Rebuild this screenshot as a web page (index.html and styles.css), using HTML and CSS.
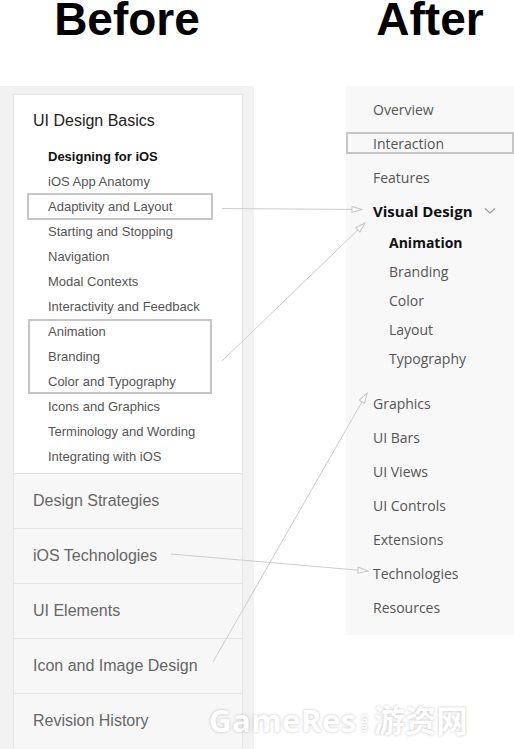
FILE: index.html
```html
<!DOCTYPE html>
<html lang="en">

<head>
    <meta charset="UTF-8">
    <meta name="viewport" content="width=device-width, initial-scale=1.0">
    <title>Before / After</title>
    <link rel="stylesheet" href="styles.css">
</head>

<body>
    <div class="page">
        <!-- Titulos -->
        <div class="header">
            <h1 class="title title-before">Before</h1>
            <h1 class="title title-after">After</h1>
        </div>

        <div class="columns">
            <!-- Navegacao antiga -->
            <div class="old-panel">
                <div class="old-card">
                    <div class="old-top">
                        <div class="old-heading">UI Design Basics</div>
                        <ul class="old-list">
                            <li class="old-item current">Designing for iOS</li>
                            <li class="old-item">iOS App Anatomy</li>
                            <li class="old-item boxed">Adaptivity and Layout</li>
                            <li class="old-item">Starting and Stopping</li>
                            <li class="old-item">Navigation</li>
                            <li class="old-item">Modal Contexts</li>
                            <li class="old-item">Interactivity and Feedback</li>
                            <li class="old-group">
                                <div class="old-item">Animation</div>
                                <div class="old-item">Branding</div>
                                <div class="old-item">Color and Typography</div>
                            </li>
                            <li class="old-item">Icons and Graphics</li>
                            <li class="old-item">Terminology and Wording</li>
                            <li class="old-item">Integrating with iOS</li>
                        </ul>
                    </div>
                    <div class="old-section">Design Strategies</div>
                    <div class="old-section">iOS Technologies</div>
                    <div class="old-section">UI Elements</div>
                    <div class="old-section">Icon and Image Design</div>
                    <div class="old-section">Revision History</div>
                </div>
            </div>

            <!-- Navegacao nova -->
            <div class="new-panel">
                <div class="new-item">Overview</div>
                <div class="new-item boxed">Interaction</div>
                <div class="new-item">Features</div>
                <div class="new-item active">
                    Visual Design
                    <svg class="chevron" width="12" height="8" viewBox="0 0 12 8">
                        <path d="M1 1.5 L6 6 L11 1.5" fill="none" stroke="#9a9a9a" stroke-width="1.2"/>
                    </svg>
                </div>
                <div class="new-sub">
                    <div class="new-subitem current">Animation</div>
                    <div class="new-subitem">Branding</div>
                    <div class="new-subitem">Color</div>
                    <div class="new-subitem">Layout</div>
                    <div class="new-subitem">Typography</div>
                </div>
                <div class="new-item">Graphics</div>
                <div class="new-item">UI Bars</div>
                <div class="new-item">UI Views</div>
                <div class="new-item">UI Controls</div>
                <div class="new-item">Extensions</div>
                <div class="new-item">Technologies</div>
                <div class="new-item">Resources</div>
            </div>
        </div>

        <!-- Setas por cima -->
        <svg class="arrows" width="514" height="749" viewBox="0 0 514 749">
            <defs>
                <marker id="head" markerWidth="12" markerHeight="10" refX="11" refY="4" orient="auto" markerUnits="userSpaceOnUse">
                    <path d="M1 1 L11 4 L1 7 Z" fill="#fff" stroke="#c4c4c4" stroke-width="1"/>
                </marker>
            </defs>
            <line x1="222" y1="208.5" x2="362" y2="209.5" marker-end="url(#head)"/>
            <line x1="222" y1="361" x2="365" y2="223" marker-end="url(#head)"/>
            <line x1="171" y1="554" x2="368" y2="571" marker-end="url(#head)"/>
            <line x1="213" y1="662" x2="367" y2="393" marker-end="url(#head)"/>
        </svg>

        <div class="watermark">GameRes<span class="wm-com">com</span>游资网</div>
    </div>
</body>

</html>
```

FILE: styles.css
```css
body {
    margin: 0;
    font-family: "Liberation Sans", Arial, sans-serif;
    background-color: #fff;
}

.page {
    position: relative;
    width: 514px;
    height: 749px;
    overflow: hidden;
}

.header {
    display: flex;
    height: 86px;
}

.title {
    margin: 0;
    font-size: 46px;
    line-height: 38px;
    font-weight: bold;
    color: #000;
    text-align: center;
}

.title-before {
    width: 254px;
}

.title-after {
    width: 168px;
    margin-left: 92px;
}

.columns {
    display: flex;
    align-items: flex-start;
}

/* ---- before ---- */

.old-panel {
    width: 254px;
    height: 663px;
    box-sizing: border-box;
    padding: 8px 11px 0 13px;
    background-color: #f2f2f2;
}

.old-card {
    background-color: #fff;
    border: 1px solid #e6e6e6;
    border-bottom: none;
}

.old-top {
    padding: 15px 0 4px 0;
}

.old-heading {
    padding-left: 19px;
    font-size: 16px;
    line-height: 22px;
    color: #222;
}

.old-list {
    list-style: none;
    margin: 12px 0 0 0;
    padding: 0;
}

.old-item {
    height: 25px;
    line-height: 25px;
    padding-left: 34px;
    font-size: 13px;
    color: #555;
}

.old-item.current {
    font-weight: bold;
    color: #111;
}

.old-item.boxed {
    margin-left: 14px;
    width: 184px;
    padding-left: 20px;
    box-sizing: border-box;
    outline: 2px solid #c6c6c6;
    outline-offset: -1px;
}

.old-group {
    margin-left: 14px;
    width: 184px;
    outline: 2px solid #c6c6c6;
    outline-offset: -2px;
}

.old-group .old-item {
    padding-left: 20px;
}

.old-section {
    height: 54px;
    line-height: 54px;
    padding-left: 19px;
    border-top: 1px solid #e4e4e4;
    background-color: #f7f7f7;
    font-size: 16px;
    color: #666;
}

/* ---- after ---- */

.new-panel {
    display: flex;
    flex-direction: column;
    gap: 12px;
    width: 168px;
    margin-left: 92px;
    padding: 12px 0 17px 0;
    background-color: #f8f8f8;
    font-family: "Open Sans", sans-serif;
}

.new-item {
    display: flex;
    align-items: center;
    height: 22px;
    padding-left: 27px;
    font-size: 14px;
    color: #555;
}

.new-item.boxed {
    outline: 2px solid #c6c6c6;
    outline-offset: -2px;
}

.new-item.active {
    font-size: 15px;
    font-weight: bold;
    color: #111;
}

.chevron {
    margin-left: 11px;
}

.new-sub {
    display: flex;
    flex-direction: column;
    gap: 7px;
    margin: -2px 0 10px 0;
}

.new-subitem {
    height: 22px;
    line-height: 22px;
    padding-left: 43px;
    font-size: 14px;
    color: #555;
}

.new-subitem.current {
    font-weight: bold;
    color: #111;
}

/* ---- overlay ---- */

.arrows {
    position: absolute;
    top: 0;
    left: 0;
    pointer-events: none;
}

.arrows line {
    stroke: #cdcdcd;
    stroke-width: 1;
}

.watermark {
    position: absolute;
    left: 209px;
    top: 696px;
    font-family: "Open Sans", "Noto Sans CJK SC", sans-serif;
    font-size: 31px;
    font-weight: bold;
    color: #fff;
    text-shadow: 0 0 3px rgba(0, 0, 0, 0.25);
    white-space: nowrap;
    letter-spacing: 0.5px;
}

.wm-com {
    display: inline-block;
    font-size: 8px;
    writing-mode: vertical-rl;
    vertical-align: middle;
    margin: 0 3px;
}
```
